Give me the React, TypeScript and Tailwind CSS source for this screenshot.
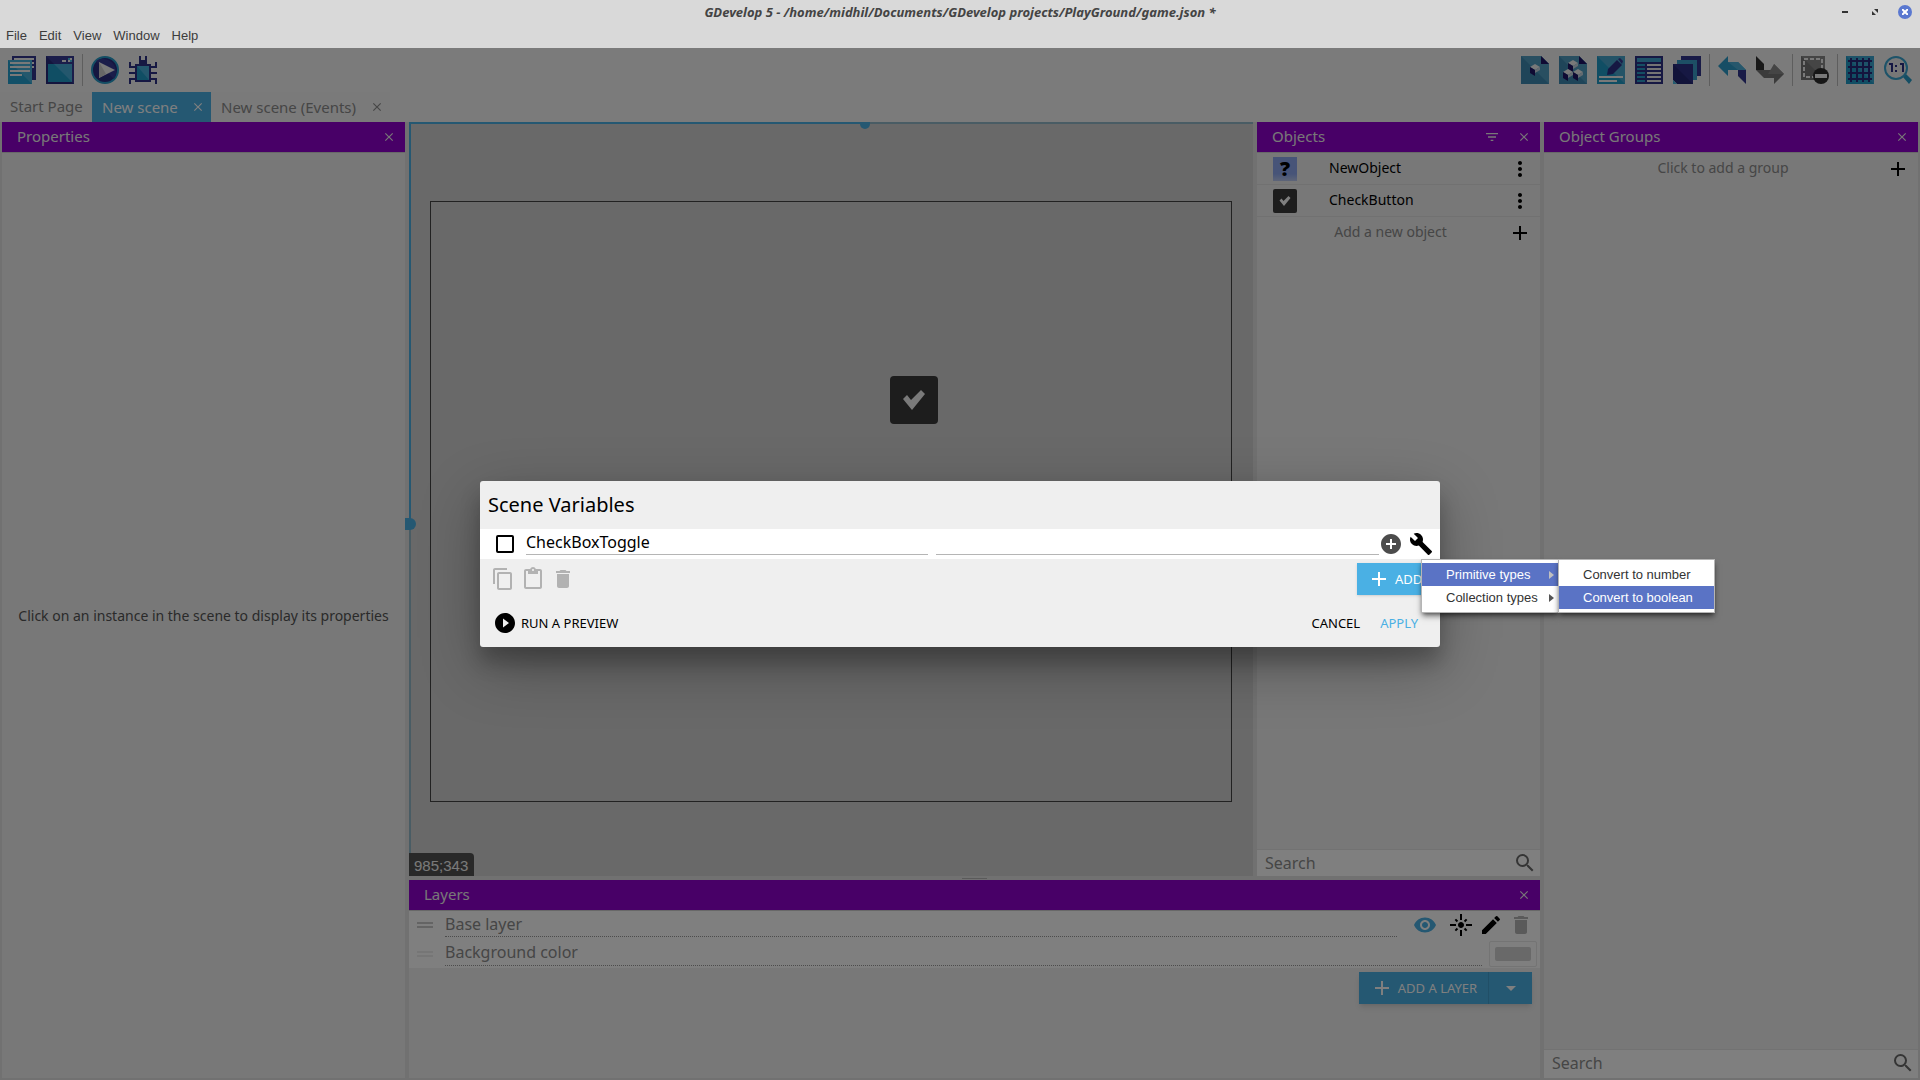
import React from 'react';
import {
    MdAdd,
    MdAddCircle,
    MdArrowDropDown,
    MdBuild,
    MdClose,
    MdContentCopy,
    MdContentPaste,
    MdDelete,
    MdDragHandle,
    MdEdit,
    MdFilterList,
    MdFlare,
    MdMoreVert,
    MdPlayCircleFilled,
    MdSearch,
    MdVisibility,
} from "react-icons/md";


type IconProps = { label: string; children: React.ReactNode };

const ToolButton = ({label, children}: IconProps) => (
    <button type="button" aria-label={label} className="size-7">
        <svg viewBox="0 0 28 28" className="size-7" aria-hidden="true">{children}</svg>
    </button>
);

const ToolGroup = ({children, divided}: { children: React.ReactNode; divided?: boolean }) => (
    <div className={divided ? "flex h-8 items-center gap-2.5 border-l border-[#bcbcbc] pl-2" : "flex h-8 items-center gap-2.5"}>
        {children}
    </div>
);

const Cube = ({x, y}: { x: number; y: number }) => (
    <g transform={`translate(${x} ${y})`}>
        <path d="M0 3L5 0l5 3-5 3z" fill="#f2f2f2"/>
        <path d="M0 3l5 3v6L0 9z" fill="#1f1466"/>
        <path d="M10 3L5 6v3l5-3z" fill="#c8d6e2"/>
    </g>
);

const CheckMark = ({className}: { className: string }) => (
    <svg viewBox="0 0 24 20" className={className} aria-hidden="true">
        <path d="M1 9l4-4 4 5 10-10 4 4L10 20z" fill="currentColor"/>
    </svg>
);

const Toolbar = () => (
    <div className="flex h-11 items-center justify-between bg-[#f7f7f7] px-2">
        <div className="flex gap-2">
            <ToolGroup>
                <ToolButton label="Project manager">
                    <path d="M4 0h24v24H4z" fill="#33368f"/>
                    <path d="M6 2h20v2H6zM24 6h2v2h-2zM24 10h2v2h-2z" fill="#f2f2f2"/>
                    <path d="M0 4h24v24H0z" fill="#24a0d0"/>
                    <path d="M0 4h24v24z" fill="#48b0da"/>
                    <path d="M2 6h20v2H2zM2 10h20v2H2zM2 14h20v2H2zM2 18h12v2H2z" fill="#f2f2f2"/>
                </ToolButton>
                <ToolButton label="Export game">
                    <path d="M0 0h28v28H0z" fill="#282b7c"/>
                    <path d="M0 0h28v28z" fill="#373a94"/>
                    <path d="M2 8h24v18H2z" fill="#219cc9"/>
                    <path d="M8 8h18v18z" fill="#48aedb"/>
                    <path d="M16 4h4v2h-4zM22 4h2v2h-2zM24 2h2v2h-2z" fill="#f2f2f2"/>
                    <path d="M22 2h2v2h-2zM24 4h2v2h-2z" fill="#46b6df"/>
                </ToolButton>
            </ToolGroup>
            <ToolGroup divided>
                <ToolButton label="Preview">
                    <circle cx="14" cy="14" r="13" fill="#2a2d80" stroke="#289cc8" strokeWidth="2"/>
                    <path d="M5 5a13 13 0 0118 18z" fill="#373a94"/>
                    <path d="M8 6l16 8-16 8z" fill="#f2f2f2"/>
                    <path d="M8 6v16l7-4z" fill="#cfcfcf"/>
                </ToolButton>
                <ToolButton label="Debugger">
                    <path d="M10 0h2v4h4V0h2v8h4v2h4V6h2v6h-6v4h6v2h-6v4h6v6h-2v-4h-4v2H6v-2H2v4H0v-6h6v-4H0v-2h6v-4H0V6h2v4h4V8h4z" fill="#2d3087"/>
                    <path d="M8 10h12v14H8z" fill="#219cc9"/>
                    <path d="M8 10h12v14z" fill="#48aedb"/>
                </ToolButton>
            </ToolGroup>
        </div>
        <div className="flex gap-2">
            <ToolGroup>
                <ToolButton label="Open objects editor">
                    <path d="M0 0h20l8 8v20H0z" fill="#3e8bb2"/>
                    <path d="M0 0h20l8 8v20z" fill="#539ec2"/>
                    <path d="M20 0l8 8h-8z" fill="#1f1466"/>
                    <Cube x={9} y={8}/>
                </ToolButton>
                <ToolButton label="Open object groups editor">
                    <path d="M0 0h20l8 8v20H0z" fill="#3e8bb2"/>
                    <path d="M0 0h20l8 8v20z" fill="#539ec2"/>
                    <path d="M20 0l8 8h-8z" fill="#1f1466"/>
                    <Cube x={9} y={4}/>
                    <Cube x={4} y={13}/>
                    <Cube x={14} y={13}/>
                </ToolButton>
                <ToolButton label="Open properties">
                    <path d="M0 0h28v28H0z" fill="#219cc9"/>
                    <path d="M0 0h28v28z" fill="#48a6cf"/>
                    <path d="M2 20h24v2H2zM2 24h18v2H2z" fill="#f2f2f2"/>
                    <path d="M11 13l9-9 5 5-9 9-6 1z" fill="#2d3087"/>
                    <path d="M21 3l2-1 3 3-1 3z" fill="#373a94"/>
                </ToolButton>
                <ToolButton label="Open instances list">
                    <path d="M0 0h28v28H0z" fill="#2d3087"/>
                    <path d="M2 2h24v4H2z" fill="#3fa5d1"/>
                    <path d="M2 8h8v2H2zM2 12h8v2H2zM2 16h8v2H2zM2 20h8v2H2zM2 24h8v2H2z" fill="#289cc8"/>
                    <path d="M12 8h14v2H12zM12 12h14v2H12zM12 16h14v2H12zM12 20h14v2H12zM12 24h14v2H12z" fill="#e8e8e8"/>
                </ToolButton>
                <ToolButton label="Open layers editor">
                    <path d="M8 0h20v20H8z" fill="#33368f"/>
                    <path d="M4 4h20v20H4z" fill="#3a9fcb"/>
                    <path d="M0 8h20v20H4l-4-4z" fill="#232672"/>
                    <path d="M0 8h20v20z" fill="#2d3087"/>
                    <path d="M0 24l4 4H0z" fill="#46b6df"/>
                </ToolButton>
            </ToolGroup>
            <ToolGroup divided>
                <ToolButton label="Undo">
                    <path d="M0 10L10 0v6h10l8 8H10v6z" fill="#2d9dca"/>
                    <path d="M10 6h10l8 8h-8z" fill="#4cafd8"/>
                    <path d="M20 14h8v14l-8-8z" fill="#33368f"/>
                </ToolButton>
                <ToolButton label="Redo">
                    <path d="M0 0l8 8v6H0z" fill="#303030"/>
                    <path d="M0 14h18V8l10 10-10 10v-6H8z" fill="#777777"/>
                    <path d="M18 8l10 10H12z" fill="#8a8a8a"/>
                </ToolButton>
            </ToolGroup>
            <ToolGroup divided>
                <ToolButton label="Delete the selected instances">
                    <path d="M0 0h24v24H0z" fill="#777777"/>
                    <path d="M0 0h24v24z" fill="#8a8a8a"/>
                    <path d="M3 3h18v18H3z" fill="none" stroke="#f2f2f2" strokeWidth="2" strokeDasharray="4 2"/>
                    <circle cx="20" cy="20" r="8" fill="#2e2e2e"/>
                    <path d="M14 18h12v4H14z" fill="#f2f2f2"/>
                </ToolButton>
            </ToolGroup>
            <ToolGroup divided>
                <ToolButton label="Toggle grid">
                    <path d="M0 0h28v28H0z" fill="#219cc9"/>
                    <path d="M0 0h28v28z" fill="#3aa6d2"/>
                    <path d="M5 2v24M11 2v24M17 2v24M23 2v24M2 5h24M2 11h24M2 17h24M2 23h24" stroke="#282b7c" strokeWidth="2"/>
                </ToolButton>
                <ToolButton label="Zoom to 1:1">
                    <path d="M19 21l3-3 6 6-3 4z" fill="#289cc8"/>
                    <circle cx="12" cy="12" r="11" fill="#eeeeee" stroke="#3aa6d2" strokeWidth="2"/>
                    <path d="M5 8h3v8M16 8h3v8M12 9v2M12 14v2" fill="none" stroke="#2d3087" strokeWidth="2"/>
                </ToolButton>
            </ToolGroup>
        </div>
    </div>
);

const Tabs = () => (
    <div className="flex h-[30px] bg-[#f7f7f7] text-[15px] leading-7 text-[#8c8c8c]">
        <button type="button" className="w-[92px] bg-[#f4f4f4] pb-0.5 pl-2.5 text-left whitespace-nowrap">Start Page</button>
        <div className="flex w-[119px] items-center justify-between bg-[#4ab0e4] pr-1.5 pl-2.5 text-white">
            <button type="button" className="whitespace-nowrap">New scene</button>
            <button type="button" aria-label="Close New scene"><MdClose className="size-3.5"/></button>
        </div>
        <div className="flex w-[179px] items-center justify-between bg-[#f4f4f4] pr-1.5 pl-2.5">
            <button type="button" className="whitespace-nowrap">New scene (Events)</button>
            <button type="button" aria-label="Close New scene (Events)"><MdClose className="size-3.5"/></button>
        </div>
    </div>
);

const PanelHeader = ({title, filter}: { title: string; filter?: boolean }) => (
    <header className="flex h-[31px] shrink-0 items-center justify-between border-b border-[#d0d0d0] bg-[#9100ce] pr-[9px] pl-[15px] text-[#f0f0f0]">
        <h2 className="pb-0.5 text-[15px] leading-5">{title}</h2>
        <div className="flex items-center gap-[17px]">
            {filter && <button type="button" aria-label="Filter"><MdFilterList className="size-4"/></button>}
            <button type="button" aria-label={`Close ${title}`}><MdClose className="size-3.5"/></button>
        </div>
    </header>
);

const SearchBar = ({label}: { label: string }) => (
    <div className="flex h-[27px] shrink-0 items-center border-t border-[#e4e4e4] bg-white pr-[3px] pl-2">
        <input type="search" aria-label={label} placeholder="Search" className="min-w-0 flex-1 text-base leading-5 outline-none placeholder:text-[#8c8c8c]"/>
        <MdSearch className="size-6 text-[#6a6a6a]"/>
    </div>
);

const PropertiesPanel = () => (
    <aside className="flex w-[403px] shrink-0 flex-col bg-[#f0f0f0]">
        <PanelHeader title="Properties"/>
        <p className="my-auto text-center text-sm whitespace-nowrap text-[#555555]">
            Click on an instance in the scene to display its properties
        </p>
    </aside>
);

const SceneCanvas = () => (
    <section aria-label="Scene" className="relative flex min-w-0 flex-1 items-center justify-center bg-[#d2d2d2]">
        <div className="absolute inset-x-0 top-0 h-0.5 bg-[#93b8c9]"/>
        <div className="absolute top-0 left-0 h-0.5 w-[54%] bg-[#4ab0e4]"/>
        <div className="absolute inset-y-0 left-0 w-0.5 bg-[#93b8c9]"/>
        <div className="absolute top-0 left-0 h-[402px] w-0.5 bg-[#4ab0e4]"/>
        <div className="absolute top-0 left-[54%] h-[7px] w-2.5 -translate-x-1/2 rounded-b-full bg-[#4ab0e4]"/>
        <div className="absolute top-[396px] -left-1 h-3 w-[11px] rounded-r-full bg-[#4ab0e4]"/>
        <div className="relative mt-[5px] aspect-[4/3] w-[802px] border border-[#444444]">
            <div className="absolute top-[174px] left-[459px] flex size-12 items-center justify-center rounded bg-[#3a3a3a]">
                <CheckMark className="h-5 w-6 text-[#f4f4f4]"/>
            </div>
        </div>
        <output className="absolute bottom-0 left-0 h-[23px] rounded-tr bg-[#4c4c4c]/95 pr-1.5 pl-[5px] font-['Liberation_Sans',sans-serif] text-[15px] leading-[26px] text-[#f4f4f4]">
            985;343
        </output>
    </section>
);

const ObjectRow = ({name, thumbnail}: { name: string; thumbnail: React.ReactNode }) => (
    <li className="flex h-8 items-center border-b border-[#e2e2e2] pr-2 pl-4">
        {thumbnail}
        <span className="ml-8 flex-1 pb-0.5 text-sm text-black">{name}</span>
        <button type="button" aria-label={`${name} menu`}><MdMoreVert className="size-6 text-black"/></button>
    </li>
);

const AddRow = ({label}: { label: string }) => (
    <button type="button" className="flex h-8 items-center pr-2 text-sm text-[#8c8c8c]">
        <span className="flex-1 pb-0.5 pl-4">{label}</span>
        <MdAdd className="size-6 text-black"/>
    </button>
);

const ObjectsPanel = () => (
    <aside className="flex w-[283px] shrink-0 flex-col bg-[#f0f0f0]">
        <PanelHeader title="Objects" filter/>
        <ul>
            <ObjectRow
                name="NewObject"
                thumbnail={<span className="flex size-6 items-center justify-center bg-linear-to-b from-[#8ea8f0] from-70% to-[#bccaf0] text-xl leading-6 font-black text-black">?</span>}
            />
            <ObjectRow
                name="CheckButton"
                thumbnail={<span className="flex size-6 items-center justify-center rounded-xs bg-[#3a3a3a]"><CheckMark className="h-2.5 w-3 text-white"/></span>}
            />
        </ul>
        <AddRow label="Add a new object"/>
        <div className="flex-1"/>
        <SearchBar label="Search objects"/>
    </aside>
);

const GroupsPanel = () => (
    <aside className="flex w-[374px] shrink-0 flex-col bg-[#f0f0f0]">
        <PanelHeader title="Object Groups"/>
        <AddRow label="Click to add a group"/>
        <div className="flex-1"/>
        <div className="bg-white pb-0.5">
            <SearchBar label="Search groups"/>
        </div>
    </aside>
);

const LayersPanel = () => (
    <section className="flex h-[198px] shrink-0 flex-col bg-[#f0f0f0]">
        <PanelHeader title="Layers"/>
        <div className="flex h-7 items-center bg-white pr-[7px] pl-1">
            <MdDragHandle className="size-6 text-[#c8c8c8]"/>
            <input aria-label="Layer name" defaultValue="Base layer" className="ml-2 h-6 min-w-0 flex-1 border-b border-dotted border-[#999999] pb-0.5 text-base leading-5 text-[#8c8c8c] outline-none"/>
            <div className="ml-4 flex items-center gap-1.5">
                <button type="button" aria-label="Visible" className="mr-1.5"><MdVisibility className="size-6 text-[#4ab0e4]"/></button>
                <button type="button" aria-label="Edit effects"><MdFlare className="size-6 text-black"/></button>
                <button type="button" aria-label="Edit layer"><MdEdit className="size-6 text-black"/></button>
                <button type="button" aria-label="Delete layer"><MdDelete className="size-6 text-[#b4b4b4]"/></button>
            </div>
        </div>
        <div className="flex h-[29px] items-center bg-white pr-[3px] pl-1">
            <MdDragHandle className="size-6 text-[#ececec]"/>
            <input aria-label="Background" defaultValue="Background color" className="ml-2 h-6 min-w-0 flex-1 border-b border-dotted border-[#999999] pb-0.5 text-base leading-5 text-[#8c8c8c] outline-none"/>
            <button type="button" aria-label="Pick background color" className="ml-[7px] flex h-[26px] w-12 items-center justify-center rounded-xs border border-[#e8e8e8]">
                <span className="h-3.5 w-9 rounded-xs bg-[#d2d2d2]"/>
            </button>
        </div>
        <div className="mt-1 mr-2 flex h-8 self-end bg-[#4ab0e4] text-white shadow-md">
            <button type="button" className="flex w-[129px] items-center justify-center gap-1 text-[13px] leading-5 whitespace-nowrap">
                <MdAdd className="size-6"/>ADD A LAYER
            </button>
            <button type="button" aria-label="More layer types" className="flex w-11 items-center justify-center border-l border-[#429fcf]">
                <MdArrowDropDown className="size-6"/>
            </button>
        </div>
    </section>
);

const MenuItem = ({label, active, arrow}: { label: string; active?: boolean; arrow?: boolean }) => (
    <button
        type="button"
        role="menuitem"
        className={active
            ? "flex h-[23px] items-center justify-between bg-[#5a73c5] pr-1 pl-6 text-left whitespace-nowrap text-white"
            : "flex h-[23px] items-center justify-between pr-1 pl-6 text-left whitespace-nowrap text-[#333333]"}
    >
        {label}
        {arrow && (
            <svg viewBox="0 0 5 8" className={active ? "h-2 w-[5px] text-[#c0c0c0]" : "h-2 w-[5px] text-[#555555]"} aria-hidden="true">
                <path d="M0 0l5 4-5 4z" fill="currentColor"/>
            </svg>
        )}
    </button>
);

const TypeMenu = () => (
    <div className="absolute top-full left-1/2 z-10 flex font-['Liberation_Sans',sans-serif] text-[13px] leading-5">
        <div role="menu" aria-label="Variable type" className="flex w-[138px] flex-col border border-[#b5b5b5] bg-white py-[3px] shadow-md shadow-black/50">
            <MenuItem label="Primitive types" active arrow/>
            <MenuItem label="Collection types" arrow/>
        </div>
        <div role="menu" aria-label="Primitive types" className="-ml-px flex w-[157px] flex-col border border-[#b5b5b5] bg-white py-[3px] shadow-md shadow-black/50">
            <MenuItem label="Convert to number"/>
            <MenuItem label="Convert to boolean" active/>
        </div>
    </div>
);

const VariablesDialog = () => (
    <div role="dialog" aria-label="Scene Variables" className="w-1/2 min-w-[640px] rounded-[3px] bg-[#efefef] text-black shadow-[0_19px_60px_rgba(0,0,0,0.3),0_15px_20px_rgba(0,0,0,0.22)]">
        <h1 className="h-12 pl-2 text-xl leading-[48px]">Scene Variables</h1>
        <div className="flex h-[30px] items-center bg-white pr-[5px] pl-4">
            <input type="checkbox" aria-label="Select CheckBoxToggle" className="size-[18px] appearance-none rounded-xs border-2 border-black"/>
            <input aria-label="Variable name" defaultValue="CheckBoxToggle" className="ml-3 h-[22px] w-[402px] border-b border-[#b5b5b5] pb-1 text-base leading-5 outline-none"/>
            <input aria-label="Variable value" className="ml-2 h-[22px] min-w-0 flex-1 border-b border-[#b5b5b5] text-base leading-5 outline-none"/>
            <button type="button" aria-label="Add child"><MdAddCircle className="size-6 text-[#4c4c4c]"/></button>
            <div className="relative ml-1 flex h-[30px] w-7 items-center justify-center">
                <button type="button" aria-label="Change type"><MdBuild className="size-6"/></button>
                <TypeMenu/>
            </div>
        </div>
        <div className="flex items-center justify-between pt-1 pr-2 pl-[11px]">
            <div className="flex gap-1.5 text-[#b2b2b2]">
                <button type="button" aria-label="Copy"><MdContentCopy className="size-6"/></button>
                <button type="button" aria-label="Paste"><MdContentPaste className="size-6"/></button>
                <button type="button" aria-label="Delete"><MdDelete className="size-6"/></button>
            </div>
            <button type="button" className="flex h-8 w-[75px] items-center gap-1 bg-[#4ab0e4] pl-2.5 text-[13px] leading-5 text-white shadow">
                <MdAdd className="size-6 shrink-0"/>ADD
            </button>
        </div>
        <div className="flex h-[52px] items-center justify-between pt-1 pr-[22px] pl-[13px] text-[13px] leading-5">
            <button type="button" className="flex items-center gap-1">
                <MdPlayCircleFilled className="size-6"/>RUN A PREVIEW
            </button>
            <div className="flex gap-5">
                <button type="button">CANCEL</button>
                <button type="button" className="text-[#4ab0e4]">APPLY</button>
            </div>
        </div>
    </div>
);

const TitleBar = () => (
    <div className="grid h-6 grid-cols-[1fr_auto_1fr] items-center text-[#444444]">
        <p className="col-start-2 text-[13px] leading-5 font-bold italic whitespace-nowrap">
            GDevelop 5 - /home/midhil/Documents/GDevelop projects/PlayGround/game.json *
        </p>
        <div className="flex items-center justify-end gap-5 pr-2">
            <button type="button" aria-label="Minimize" className="mr-1 h-0.5 w-1.5 bg-[#333333]"/>
            <button type="button" aria-label="Restore">
                <svg viewBox="0 0 6 6" className="size-1.5" aria-hidden="true">
                    <path d="M2 0h4v4zM0 2l4 4H0z" fill="#333333"/>
                </svg>
            </button>
            <button type="button" aria-label="Close window" className="flex size-3.5 items-center justify-center rounded-full bg-[#5a78d0] text-white">
                <svg viewBox="0 0 6 6" className="size-1.5" aria-hidden="true">
                    <path d="M0 0l6 6M6 0L0 6" fill="none" stroke="currentColor" strokeWidth="2"/>
                </svg>
            </button>
        </div>
    </div>
);

const MenuBar = () => (
    <nav className="flex h-6 gap-3 pl-1.5 font-['Liberation_Sans',sans-serif] text-[13px] leading-6 text-[#3c3c3c]">
        {["File", "Edit", "View", "Window", "Help"].map((item) => (
            <button type="button" key={item} className="h-6">{item}</button>
        ))}
    </nav>
);

const App = () => {
    return (
        <div className="flex min-h-screen flex-col bg-[#d9d9d9] font-['Noto_Sans',sans-serif]">
            <TitleBar/>
            <MenuBar/>
            <div className="relative flex flex-1 flex-col bg-[#e2e2e2]">
                <Toolbar/>
                <Tabs/>
                <main className="flex flex-1 gap-1 px-0.5 pb-0.5">
                    <PropertiesPanel/>
                    <div className="flex min-w-0 flex-1 flex-col">
                        <div className="flex flex-1 gap-1">
                            <SceneCanvas/>
                            <ObjectsPanel/>
                        </div>
                        <div className="flex h-1 items-center justify-center">
                            <div className="h-px w-[25px] bg-[#b4b4b4]"/>
                        </div>
                        <LayersPanel/>
                    </div>
                    <GroupsPanel/>
                </main>
                <div className="absolute inset-0 flex items-center justify-center bg-black/50">
                    <VariablesDialog/>
                </div>
            </div>
        </div>
    );
};

export default App;
